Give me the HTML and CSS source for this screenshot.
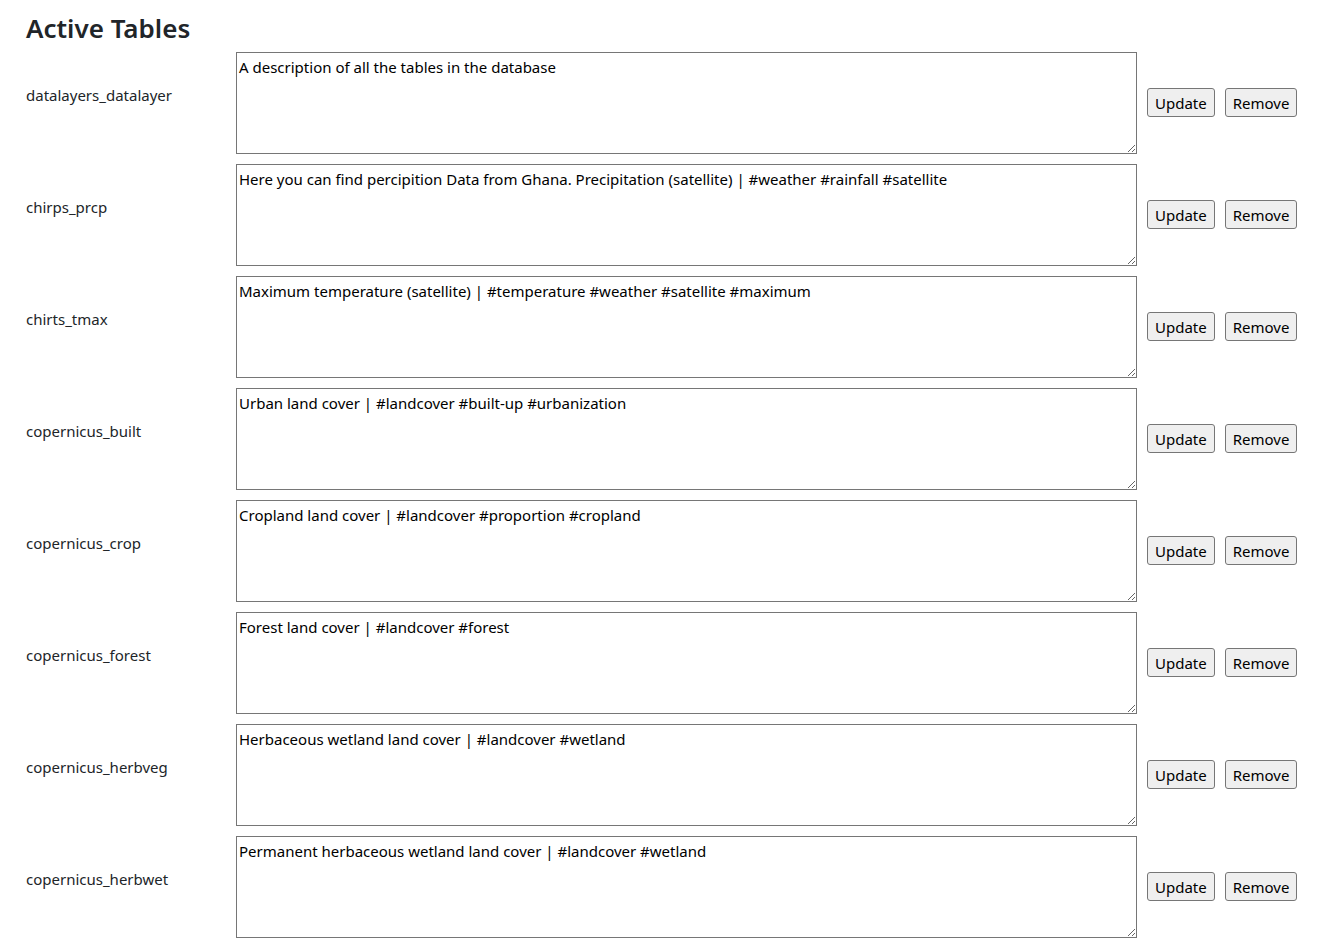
FILE: index.html
```html
<!DOCTYPE html>
<html lang="en">
<head>
<meta charset="utf-8">
<title>Active Tables</title>
<link rel="stylesheet" href="styles.css">
</head>
<body>
<div class="page">
  <h3 class="title">Active Tables</h3>
  <div class="tables">
    <div class="row">
      <div class="name">datalayers_datalayer</div>
      <textarea class="desc">A description of all the tables in the database</textarea>
      <div class="actions"><button class="btn">Update</button><button class="btn">Remove</button></div>
    </div>
    <div class="row">
      <div class="name">chirps_prcp</div>
      <textarea class="desc">Here you can find percipition Data from Ghana. Precipitation (satellite) | #weather #rainfall #satellite</textarea>
      <div class="actions"><button class="btn">Update</button><button class="btn">Remove</button></div>
    </div>
    <div class="row">
      <div class="name">chirts_tmax</div>
      <textarea class="desc">Maximum temperature (satellite) | #temperature #weather #satellite #maximum</textarea>
      <div class="actions"><button class="btn">Update</button><button class="btn">Remove</button></div>
    </div>
    <div class="row">
      <div class="name">copernicus_built</div>
      <textarea class="desc">Urban land cover | #landcover #built-up #urbanization</textarea>
      <div class="actions"><button class="btn">Update</button><button class="btn">Remove</button></div>
    </div>
    <div class="row">
      <div class="name">copernicus_crop</div>
      <textarea class="desc">Cropland land cover | #landcover #proportion #cropland</textarea>
      <div class="actions"><button class="btn">Update</button><button class="btn">Remove</button></div>
    </div>
    <div class="row">
      <div class="name">copernicus_forest</div>
      <textarea class="desc">Forest land cover | #landcover #forest</textarea>
      <div class="actions"><button class="btn">Update</button><button class="btn">Remove</button></div>
    </div>
    <div class="row">
      <div class="name">copernicus_herbveg</div>
      <textarea class="desc">Herbaceous wetland land cover | #landcover #wetland</textarea>
      <div class="actions"><button class="btn">Update</button><button class="btn">Remove</button></div>
    </div>
    <div class="row">
      <div class="name">copernicus_herbwet</div>
      <textarea class="desc">Permanent herbaceous wetland land cover | #landcover #wetland</textarea>
      <div class="actions"><button class="btn">Update</button><button class="btn">Remove</button></div>
    </div>
  </div>
</div>
</body>
</html>
```

FILE: styles.css
```css
html, body {
  margin: 0;
  padding: 0;
  background: #ffffff;
}

body {
  font-family: "Noto Sans", "Open Sans", sans-serif;
  font-size: 15px;
  color: #212529;
  overflow: hidden;
}

.page {
  padding: 0 0 0 26px;
}

.title {
  margin: 0;
  padding-top: 12px;
  height: 52px;
  box-sizing: border-box;
  font-size: 26px;
  font-weight: 600;
  line-height: 32px;
  color: #212529;
}

.tables {
  display: flex;
  flex-direction: column;
  gap: 10px;
}

.row {
  display: flex;
  align-items: center;
}

.name {
  width: 210px;
  flex: none;
  margin-top: -16px;
  line-height: 22px;
}

.desc {
  flex: none;
  width: 901px;
  height: 102px;
  box-sizing: border-box;
  margin: 0;
  padding: 2px;
  border: 1px solid #767676;
  border-radius: 0;
  font-family: "Noto Sans", "Open Sans", sans-serif;
  font-size: 15px;
  line-height: 24px;
  color: #000000;
  background: #ffffff;
  resize: both;
}

.actions {
  display: flex;
  gap: 10px;
  margin-left: 10px;
  margin-top: -1px;
}

.btn {
  height: 29px;
  box-sizing: border-box;
  padding: 0 7px;
  border: 1px solid #767676;
  border-radius: 3px;
  background: #efefef;
  font-family: "Noto Sans", "Open Sans", sans-serif;
  font-size: 15px;
  color: #000000;
}
```
